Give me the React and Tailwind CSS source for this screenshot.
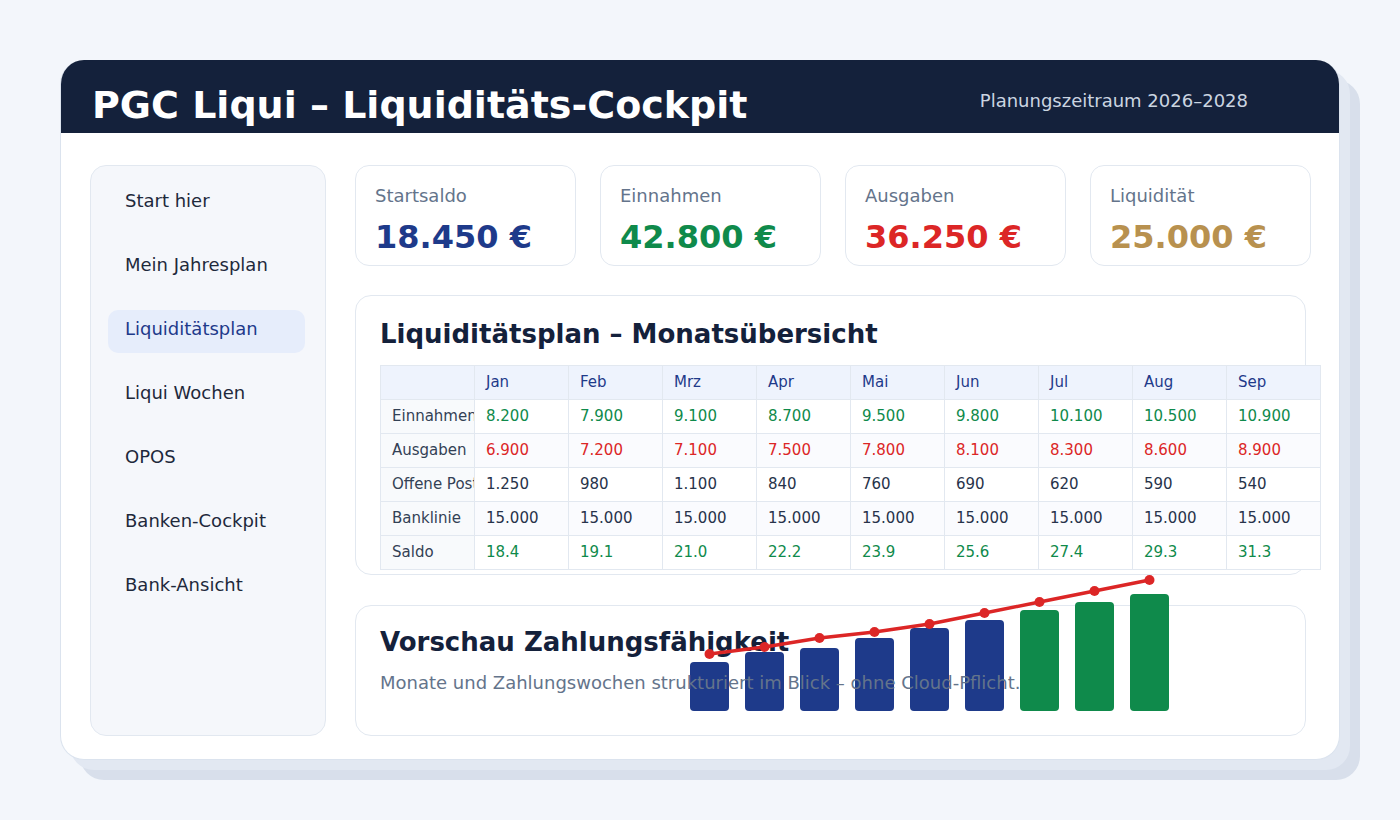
import React from "react";

const nav = [
  "Start hier",
  "Mein Jahresplan",
  "Liquiditätsplan",
  "Liqui Wochen",
  "OPOS",
  "Banken-Cockpit",
  "Bank-Ansicht",
];

const kpis = [
  { label: "Startsaldo", value: "18.450 €", color: "text-[#1e3a8a]" },
  { label: "Einnahmen", value: "42.800 €", color: "text-[#0f8a4b]" },
  { label: "Ausgaben", value: "36.250 €", color: "text-[#dc2626]" },
  { label: "Liquidität", value: "25.000 €", color: "text-[#b8914f]" },
];

const months = ["Jan", "Feb", "Mrz", "Apr", "Mai", "Jun", "Jul", "Aug", "Sep"];

const rows = [
  { label: "Einnahmen", color: "text-[#0f8a4b]", values: ["8.200", "7.900", "9.100", "8.700", "9.500", "9.800", "10.100", "10.500", "10.900"] },
  { label: "Ausgaben", color: "text-[#dc2626]", values: ["6.900", "7.200", "7.100", "7.500", "7.800", "8.100", "8.300", "8.600", "8.900"] },
  { label: "Offene Posten", color: "text-[#27334a]", values: ["1.250", "980", "1.100", "840", "760", "690", "620", "590", "540"] },
  { label: "Banklinie", color: "text-[#27334a]", values: ["15.000", "15.000", "15.000", "15.000", "15.000", "15.000", "15.000", "15.000", "15.000"] },
  { label: "Saldo", color: "text-[#0f8a4b]", values: ["18.4", "19.1", "21.0", "22.2", "23.9", "25.6", "27.4", "29.3", "31.3"] },
];

const barTops = [92, 82, 78, 68, 58, 50, 40, 32, 24];
const pts = [
  [29.5, 84],
  [84.5, 77],
  [139.5, 68],
  [194.5, 62],
  [249.5, 54],
  [304.5, 43],
  [359.5, 32],
  [414.5, 21],
  [469.5, 10],
];

export default function App() {
  return (
    <div className="w-[1400px] h-[820px] bg-[#f3f6fb] pt-[60px] pl-[60px] font-['DejaVu_Sans',sans-serif]">
      <div className="w-[1280px] h-[700px] bg-white rounded-[24px] border border-t-0 border-[#dbe3ee] overflow-hidden shadow-[10px_10px_0_#e2e8f2,20px_20px_0_#d8dfeb] flex flex-col">
        {/* Header */}
        <div className="h-[73px] shrink-0 bg-[#14213b] flex items-start justify-between pl-[31px] pr-[91px] pt-[26px]">
          <h1 className="text-[38px] leading-none font-bold text-white whitespace-nowrap">
            PGC Liqui – Liquiditäts-Cockpit
          </h1>
          <div className="mt-[3px] text-[18px] leading-[24px] text-[#cbd5e1] whitespace-nowrap">
            Planungszeitraum 2026–2028
          </div>
        </div>

        {/* Body */}
        <div className="flex gap-[29px] pl-[29px] pt-[32px]">
          {/* Sidebar */}
          <div className="w-[236px] h-[571px] shrink-0 bg-[#f5f7fb] border border-[#e2e8f0] rounded-[16px] pt-[13px] pl-[17px] flex flex-col gap-[21px]">
            {nav.map((n) => {
              const active = n === "Liquiditätsplan";
              return (
                <div
                  key={n}
                  className={
                    "w-[197px] h-[43px] rounded-[10px] pl-[17px] flex items-center text-[18px] leading-[24px] " +
                    (active
                      ? "bg-[#e6edfb] text-[#1e3a8a] mt-[3px] mb-[-3px] pb-[6px]"
                      : "text-[#1e293b]")
                  }
                >
                  {n}
                </div>
              );
            })}
          </div>

          {/* Main */}
          <div className="flex flex-col">
            <div className="flex gap-[24px]">
              {kpis.map((k) => (
                <div
                  key={k.label}
                  className="w-[221px] h-[101px] bg-white border border-[#e2e8f0] rounded-[14px] pt-[18px] pl-[19px]"
                >
                  <div className="text-[18px] leading-[24px] text-[#64748b]">{k.label}</div>
                  <div className={"mt-[9px] text-[32px] leading-[40px] font-bold " + k.color}>{k.value}</div>
                </div>
              ))}
            </div>

            {/* Table card */}
            <div className="mt-[29px] w-[951px] h-[280px] bg-white border border-[#e2e8f0] rounded-[16px] pt-[22px] pl-[24px]">
              <h2 className="text-[26px] leading-[32px] font-bold text-[#14213b] whitespace-nowrap">
                Liquiditätsplan – Monatsübersicht
              </h2>
              <div className="mt-[15px] w-[941px] grid grid-cols-[repeat(10,94px)] border-l border-t border-[#e2e8f0] text-[15px]">
                <div className="h-[34px] bg-[#eef3fd] border-r border-b border-[#e2e8f0]" />
                {months.map((m) => (
                  <div
                    key={m}
                    className="h-[34px] bg-[#eef3fd] border-r border-b border-[#e2e8f0] pl-[11px] flex items-center text-[#1e3a8a]"
                  >
                    {m}
                  </div>
                ))}
                {rows.map((r, ri) => (
                  <React.Fragment key={r.label}>
                    <div className="h-[34px] bg-[#f8fafc] border-r border-b border-[#e2e8f0] pl-[11px] flex items-center text-[#334155] whitespace-nowrap overflow-hidden">
                      {r.label}
                    </div>
                    {r.values.map((v, vi) => (
                      <div
                        key={vi}
                        className={
                          "h-[34px] border-r border-b border-[#e2e8f0] pl-[11px] flex items-center " +
                          (ri % 2 === 1 ? "bg-[#fafbfe] " : "bg-white ") +
                          r.color
                        }
                      >
                        {v}
                      </div>
                    ))}
                  </React.Fragment>
                ))}
              </div>
            </div>

            {/* Chart card */}
            <div className="relative mt-[30px] w-[951px] h-[131px] bg-white border border-[#e2e8f0] rounded-[16px] pt-[20px] pl-[24px]">
              <svg
                className="absolute left-[324px] top-[-36px] z-0"
                width="500"
                height="150"
                viewBox="0 0 500 150"
              >
                {barTops.map((t, i) => (
                  <rect
                    key={i}
                    x={10 + 55 * i}
                    y={t}
                    width="39"
                    height={141 - t}
                    rx="4"
                    fill={i < 6 ? "#1e3a8a" : "#0f8a4b"}
                  />
                ))}
              </svg>
              <div className="relative z-10">
                <h2 className="text-[26px] leading-[32px] font-bold text-[#14213b] whitespace-nowrap">
                  Vorschau Zahlungsfähigkeit
                </h2>
                <p className="mt-[13px] text-[18px] leading-[24px] text-[#64748b] whitespace-nowrap">
                  Monate und Zahlungswochen strukturiert im Blick – ohne Cloud-Pflicht.
                </p>
              </div>
              <svg
                className="absolute left-[324px] top-[-36px] z-20"
                width="500"
                height="150"
                viewBox="0 0 500 150"
              >
                <polyline
                  points={pts.map((p) => p.join(",")).join(" ")}
                  fill="none"
                  stroke="#dc2626"
                  strokeWidth="3.5"
                  strokeLinejoin="round"
                />
                {pts.map((p, i) => (
                  <circle key={i} cx={p[0]} cy={p[1]} r="5" fill="#dc2626" />
                ))}
              </svg>
            </div>
          </div>
        </div>
      </div>
    </div>
  );
}
